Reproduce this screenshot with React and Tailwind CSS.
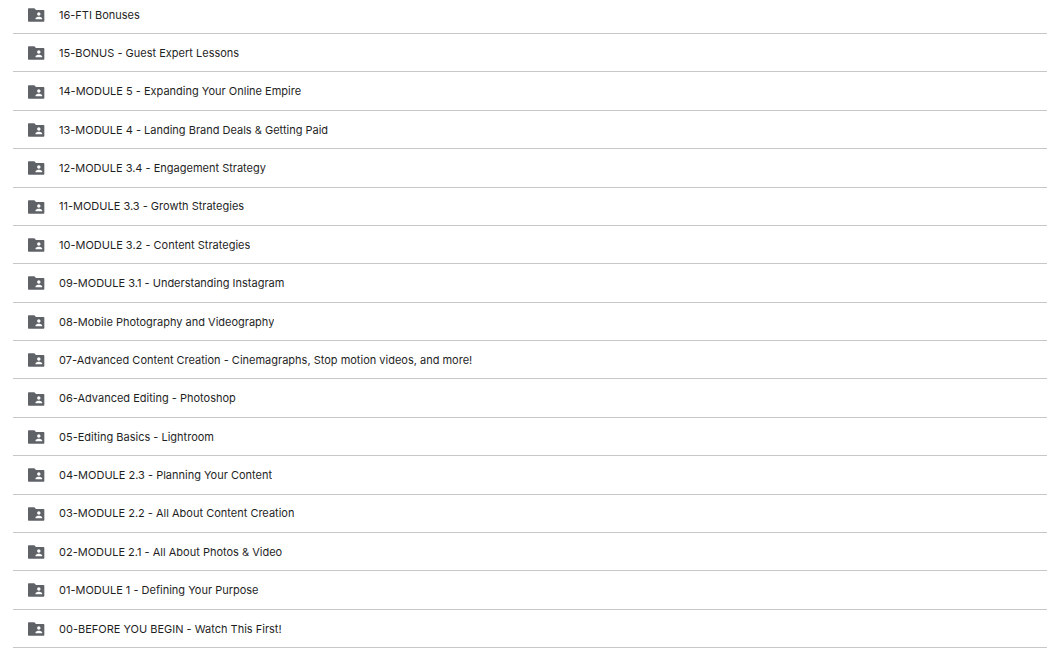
import React from "react";

const folders = [
  "16-FTI Bonuses",
  "15-BONUS - Guest Expert Lessons",
  "14-MODULE 5 - Expanding Your Online Empire",
  "13-MODULE 4 - Landing Brand Deals & Getting Paid",
  "12-MODULE 3.4 - Engagement Strategy",
  "11-MODULE 3.3 - Growth Strategies",
  "10-MODULE 3.2 - Content Strategies",
  "09-MODULE 3.1 - Understanding Instagram",
  "08-Mobile Photography and Videography",
  "07-Advanced Content Creation - Cinemagraphs, Stop motion videos, and more!",
  "06-Advanced Editing - Photoshop",
  "05-Editing Basics - Lightroom",
  "04-MODULE 2.3 - Planning Your Content",
  "03-MODULE 2.2 - All About Content Creation",
  "02-MODULE 2.1 - All About Photos & Video",
  "01-MODULE 1 - Defining Your Purpose",
  "00-BEFORE YOU BEGIN - Watch This First!",
];

// Folder with a person badge, used for shared folders
const SharedFolderIcon = () => (
  <svg
    className="w-5 h-5 shrink-0"
    viewBox="0 0 24 24"
    fill="#5f6368"
    aria-hidden="true"
  >
    <path d="M20.8 6H12l-2-2H3.6C2.9 4 2.4 4.5 2.4 5.2v13.6c0 .7.5 1.2 1.2 1.2h17.2c.7 0 1.2-.5 1.2-1.2V7.2c0-.7-.5-1.2-1.2-1.2zM15.4 8.8c1.1 0 2 .9 2 2s-.9 2-2 2-2-.9-2-2 .9-2 2-2zm4 8.2h-8v-1c0-1.33 2.67-2 4-2s4 .67 4 2v1z" />
  </svg>
);

const App = () => {
  return (
    <main className="min-h-screen flex flex-col bg-white pl-[13px] pb-px font-['Inter','Liberation_Sans',sans-serif]">
      <ul className="grow flex flex-col">
        {folders.map((name) => (
          <li
            key={name}
            className="min-h-[38px] grow flex pt-px border-b border-[#c7c7c7] first:min-h-[34px] first:grow-0 first:pt-0 first:pb-[3px]"
          >
            <a
              href="#"
              className="flex-1 flex items-center gap-[13px] pl-[13px] text-[11px] text-[#1f1f1f]"
            >
              <SharedFolderIcon />
              <span className="truncate">{name}</span>
            </a>
          </li>
        ))}
      </ul>
    </main>
  );
};

export default App;
